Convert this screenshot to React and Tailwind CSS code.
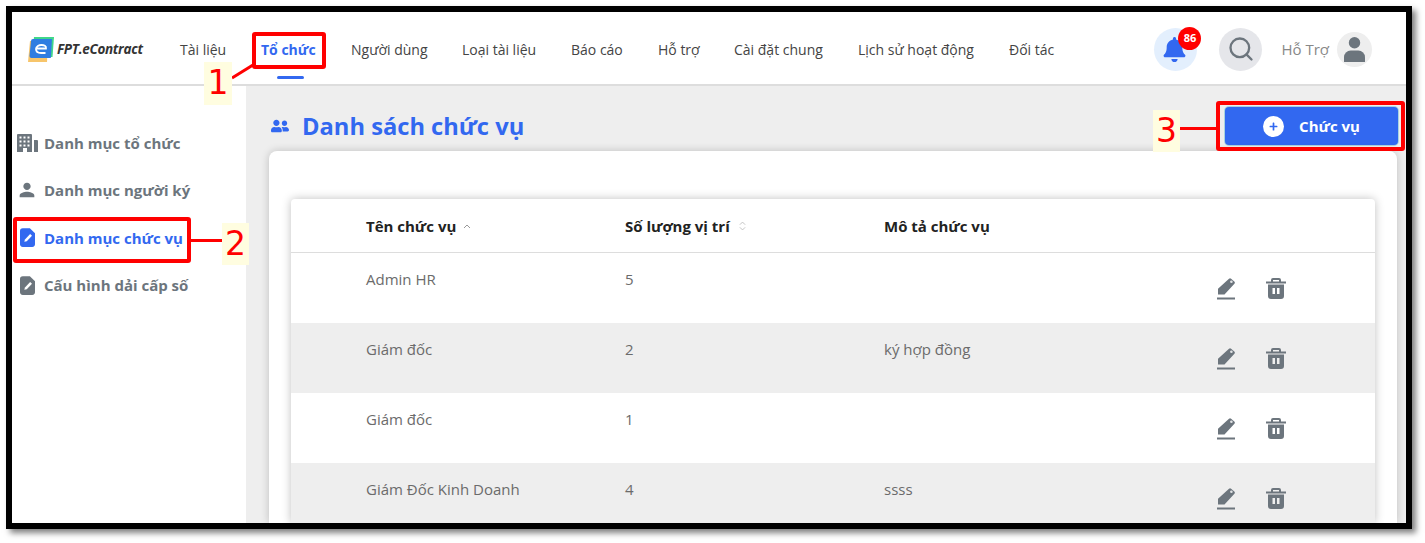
import React from "react";
import { FaBell, FaUserFriends, FaPlus } from "react-icons/fa";
import { FiSearch } from "react-icons/fi";
import { MdPerson } from "react-icons/md";

const navItems = [
  { label: "Tài liệu", w: "w-[81px]" },
  { label: "Tổ chức", active: true, w: "w-[90px]" },
  { label: "Người dùng", w: "w-[111px]" },
  { label: "Loại tài liệu", w: "w-[109px]" },
  { label: "Báo cáo", w: "w-[87px]" },
  { label: "Hỗ trợ", w: "w-[76px]" },
  { label: "Cài đặt chung", w: "w-[124px]" },
  { label: "Lịch sử hoạt động", w: "w-[151px]" },
  { label: "Đối tác", w: "w-[80px]" },
];

const rows = [
  { name: "Admin HR", count: 5, desc: "" },
  { name: "Giám đốc", count: 2, desc: "ký hợp đồng" },
  { name: "Giám đốc", count: 1, desc: "" },
  { name: "Giám Đốc Kinh Doanh", count: 4, desc: "ssss" },
];

function FileEditIcon({ className }) {
  return (
    <svg viewBox="0 0 16 20" className={className} fill="currentColor">
      <path d="M3 0h7.500L16 5.500V17a3 3 0 0 1-3 3H3a3 3 0 0 1-3-3V3a3 3 0 0 1 3-3z" />
      <path d="M10.800 6.300l2 1.900-5.600 5.700-2.600.7.700-2.600z" fill="#fff" />
    </svg>
  );
}

function BuildingIcon({ className }) {
  return (
    <svg viewBox="0 0 21 18" className={className} fill="currentColor">
      <path
        fillRule="evenodd"
        d="M1 0h13a1 1 0 0 1 1 1v17H10v-4H6v4H0V1a1 1 0 0 1 1-1zM2.500 2.500v2h2v-2zm4 0v2h2v-2zm4 0v2h2v-2zm-8 4v2h2v-2zm4 0v2h2v-2zm4 0v2h2v-2zm-8 4v2h2v-2zm4 0v2h2v-2zm4 0v2h2v-2z"
      />
      <path d="M17 6h3a1 1 0 0 1 1 1v11h-4z" />
    </svg>
  );
}

function PenIcon({ className }) {
  return (
    <svg viewBox="0 0 18 22" className={className} fill="currentColor">
      <path d="M12 .800a1.500 1.500 0 0 1 2.100 0l3.200 2.800a1.500 1.500 0 0 1 .1 2.100L7.500 16.500H1V10.800z" />
      <circle cx="14.400" cy="3.800" r="1.300" fill="#fff" opacity="0.8" />
      <rect x="0" y="19.500" width="18" height="2" />
    </svg>
  );
}

function TrashIcon({ className }) {
  return (
    <svg viewBox="0 0 20 21" className={className} fill="currentColor">
      <path d="M7 0h6a2 2 0 0 1 2 2v1.500h5V5.500H0V3.500h5V2a2 2 0 0 1 2-2zm0 3.500h6V2H7z" fillRule="evenodd" />
      <path fillRule="evenodd" d="M2 6.500h16V18a3 3 0 0 1-3 3H5a3 3 0 0 1-3-3zM6.500 10v6h2.500v-6zm4.500 0v6h2.500v-6z" />
    </svg>
  );
}

function AvatarIcon({ className }) {
  return (
    <svg viewBox="0 0 22 26" className={className} fill="currentColor">
      <circle cx="11" cy="6" r="6" />
      <path d="M0 26v-5a7 7 0 0 1 7-7h8a7 7 0 0 1 7 7v5z" />
    </svg>
  );
}

function Logo() {
  return (
    <svg viewBox="0 0 26 25" className="w-[26px] h-[25px] shrink-0">
      <path d="M6 0h20l-1.500 20H4z" fill="#3fd68a" />
      <path d="M2 4h18l-1 21H0z" fill="#f7c56b" />
      <path d="M5 2h19l-1.200 19H3.500a2 2 0 0 1-2-2L3 4a2 2 0 0 1 2-2z" fill="#2f7de1" />
      <path d="M9 11.500h9c.5-2.500-2-3.500-4.500-3.500S8 9.500 8 12s2 4 5 4h4.500" fill="none" stroke="#fff" strokeWidth="1.800" />
    </svg>
  );
}

function SideItem({ icon, label, active }) {
  return (
    <div className={`flex items-center h-[47.500px] gap-[6px] pl-[4px] text-[15px] font-bold ${active ? "text-[#3268f0]" : "text-[#6c757d]"}`}>
      <span className="w-[22px] flex justify-center">{icon}</span>
      {label}
    </div>
  );
}

function Row({ row, shaded }) {
  return (
    <div className={`grid grid-cols-[75px_259px_259px_333px_49px_1fr] h-[70px] pt-[16px] text-[15px] leading-[20px] text-[#6b6b6b] ${shaded ? "bg-[#eeeeee]" : "bg-white"}`}>
      <div />
      <div>{row.name}</div>
      <div>{row.count}</div>
      <div>{row.desc}</div>
      <div className="pt-[9px] text-[#6c757d]">
        <PenIcon className="w-[18px] h-[22px]" />
      </div>
      <div className="pt-[9px] text-[#6c757d]">
        <TrashIcon className="w-[20px] h-[21px]" />
      </div>
    </div>
  );
}

const digit = "absolute bg-[#fffde0] text-[#ff0000] text-[33px] leading-[42px] font-['DejaVu_Sans',sans-serif] text-center";

export default function App() {
  return (
    <div className="w-[1425px] h-[543px] bg-white overflow-hidden font-['Open_Sans',sans-serif]">
      <div className="relative w-[1406px] h-[523px] ml-[6px] mt-[6px] border-[6px] border-black shadow-[4px_4px_6px_rgba(0,0,0,0.5)] overflow-hidden bg-white flex flex-col">
        {/* Top bar */}
        <header className="h-[74px] shrink-0 bg-white border-b-2 border-[#dddddd] flex items-center pl-[16px] pt-[2px]">
          <div className="flex items-center gap-[3px] w-[152px]">
            <Logo />
            <span className="text-[13.500px] font-bold italic text-[#333] tracking-[-0.3px]">FPT.eContract</span>
          </div>
          <nav className="flex items-center">
            {navItems.map((item) => (
              <div key={item.label} className={`relative ${item.w} text-[14px] ${item.active ? "font-bold text-[#3268f0]" : "text-[#444]"}`}>
                {item.label}
                {item.active && <span className="absolute left-[16px] top-[37px] w-[27px] h-[3px] rounded-full bg-[#3268f0]" />}
              </div>
            ))}
          </nav>
          <div className="ml-auto mr-[34px] flex items-center">
            <div className="relative w-[43px] h-[43px] rounded-full bg-[#e3effd] flex items-center justify-center text-[#3268f0]">
              <FaBell size={25} className="mr-[2px]" />
              <span className="absolute -top-[1px] left-[24px] w-[23px] h-[23px] rounded-full bg-[#ff0000] text-white text-[11px] font-bold flex items-center justify-center">86</span>
            </div>
            <div className="ml-[22px] w-[43px] h-[43px] rounded-full bg-[#e5e6ea] flex items-center justify-center text-[#6c757d]">
              <FiSearch size={28} />
            </div>
            <span className="ml-[19px] text-[15px] text-[#888]">Hỗ Trợ</span>
            <div className="ml-[8px] w-[35px] h-[35px] rounded-full bg-[#eeeeee] flex items-center justify-center text-[#6c757d]">
              <AvatarIcon className="w-[21px] h-[25px]" />
            </div>
          </div>
        </header>

        <div className="flex flex-1 min-h-0">
          {/* Sidebar */}
          <aside className="w-[234px] shrink-0 bg-white pt-[33px]">
            <SideItem label="Danh mục tổ chức" icon={<BuildingIcon className="w-[21px] h-[18px]" />} />
            <SideItem label="Danh mục người ký" icon={<MdPerson size={24} />} />
            <SideItem label="Danh mục chức vụ" active icon={<FileEditIcon className="w-[15px] h-[19px]" />} />
            <SideItem label="Cấu hình dải cấp số" icon={<FileEditIcon className="w-[15px] h-[19px]" />} />
          </aside>

          {/* Main */}
          <main className="flex-1 min-w-0 bg-[#eeeeee] pl-[23px] pr-[9px] flex flex-col">
            <div className="h-[65px] shrink-0 flex items-center justify-between text-[#3268f0]">
              <div className="flex items-center gap-[13px] pl-[2px] pt-[16px]">
                <FaUserFriends size={18} />
                <h1 className="text-[23.700px] font-bold">Danh sách chức vụ</h1>
              </div>
              <button className="mr-[-1px] mt-[15px] ring-1 ring-[#a9d3e0] w-[173px] h-[38px] rounded-[4px] bg-[#3268f0] text-white text-[15px] font-bold flex items-center justify-center gap-[15px]">
                <span className="w-[21px] h-[21px] rounded-full bg-white text-[#3268f0] flex items-center justify-center">
                  <FaPlus size={9} />
                </span>
                Chức vụ
              </button>
            </div>
            <section className="flex-1 bg-white rounded-t-[8px] shadow-[0_0_8px_rgba(0,0,0,0.2)] pt-[48px] px-[22px] overflow-hidden">
              <div className="bg-white rounded-t-[4px] shadow-[0_0_10px_rgba(0,0,0,0.25)] h-full overflow-hidden">
                <div className="grid grid-cols-[75px_259px_259px_1fr] h-[54px] pt-[1px] items-center border-b border-[#dddddd] text-[15px] font-bold text-[#222]">
                  <div />
                  <div className="flex items-center gap-[7px]">
                    Tên chức vụ
                    <svg viewBox="0 0 8 5" className="w-[8px] h-[5px] text-[#999]" fill="none" stroke="currentColor"><path d="M1 4l3-3 3 3" /></svg>
                  </div>
                  <div className="flex items-center gap-[9px]">
                    Số lượng vị trí
                    <svg viewBox="0 0 8 11" className="w-[7px] h-[10px] text-[#bbb]" fill="none" stroke="currentColor"><path d="M1 4l3-3 3 3M1 7l3 3 3-3" /></svg>
                  </div>
                  <div>Mô tả chức vụ</div>
                </div>
                {rows.map((row, i) => (
                  <Row key={i} row={row} shaded={i % 2 === 1} />
                ))}
              </div>
            </section>
          </main>
        </div>

        {/* Annotations */}
        <div className="absolute left-[240px] top-[20px] w-[74px] h-[37px] border-[4px] border-[#ff0000] rounded-[3px]" />
        <div className={`${digit} left-[192px] top-[50px] w-[28px] h-[43px]`}>1</div>
        <svg className="absolute left-[220px] top-[52px] w-[22px] h-[16px]" viewBox="0 0 22 16"><path d="M0 14L21 1" stroke="#ff0000" strokeWidth="3" /></svg>

        <div className="absolute left-[1px] top-[205px] w-[178px] h-[46px] border-[4px] border-[#ff0000] rounded-[3px]" />
        <div className={`${digit} left-[210px] top-[211px] w-[27px] h-[42px]`}>2</div>
        <div className="absolute left-[179px] top-[227px] w-[31px] h-[3px] bg-[#ff0000]" />

        <div className="absolute left-[1204px] top-[89px] w-[189px] h-[50px] border-[4px] border-[#ff0000] rounded-[3px]" />
        <div className={`${digit} left-[1141px] top-[98px] w-[27px] h-[42px]`}>3</div>
        <div className="absolute left-[1168px] top-[115px] w-[36px] h-[3px] bg-[#ff0000]" />
      </div>
    </div>
  );
}
